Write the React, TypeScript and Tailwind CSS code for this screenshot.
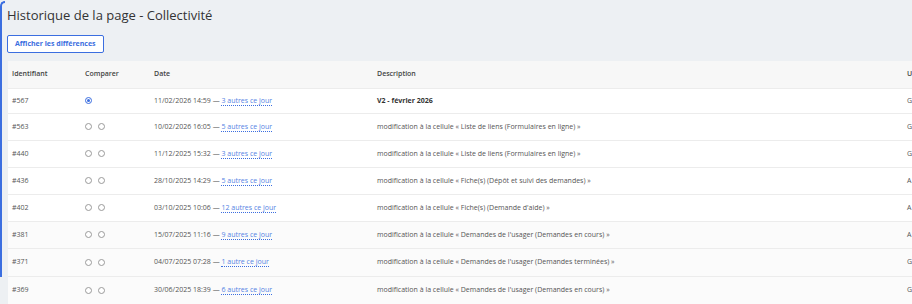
import React from 'react'

type Row = {
  id: string
  selected?: boolean
  date: string
  others: string
  desc: string
  bold?: boolean
  user: string
  shaded?: boolean
}

const rows: Row[] = [
  { id: '#567', selected: true, date: '11/02/2026 14:59', others: '3 autres ce jour', desc: 'V2 - février 2026', bold: true, user: 'G' },
  { id: '#563', date: '10/02/2026 16:05', others: '5 autres ce jour', desc: 'modification à la cellule « Liste de liens (Formulaires en ligne) »', user: 'G' },
  { id: '#440', date: '11/12/2025 15:32', others: '3 autres ce jour', desc: 'modification à la cellule « Liste de liens (Formulaires en ligne) »', user: 'G' },
  { id: '#436', date: '28/10/2025 14:29', others: '5 autres ce jour', desc: 'modification à la cellule « Fiche(s) (Dépôt et suivi des demandes) »', user: 'A' },
  { id: '#402', date: '03/10/2025 10:06', others: '12 autres ce jour', desc: "modification à la cellule « Fiche(s) (Demande d'aide) »", user: 'A' },
  { id: '#381', date: '15/07/2025 11:16', others: '9 autres ce jour', desc: "modification à la cellule « Demandes de l'usager (Demandes en cours) »", user: 'A', shaded: true },
  { id: '#371', date: '04/07/2025 07:28', others: '1 autre ce jour', desc: "modification à la cellule « Demandes de l'usager (Demandes terminées) »", user: 'G', shaded: true },
  { id: '#369', date: '30/06/2025 18:39', others: '6 autres ce jour', desc: "modification à la cellule « Demandes de l'usager (Demandes en cours) »", user: 'G', shaded: true },
]

function Radio({ checked }: { checked?: boolean }) {
  if (checked) {
    return (
      <span className="inline-flex h-[7px] w-[7px] items-center justify-center rounded-full border border-[#3b6ee0] bg-white">
        <span className="h-[3px] w-[3px] rounded-full bg-[#3b6ee0]" />
      </span>
    )
  }
  return <span className="inline-block h-[7px] w-[7px] rounded-full border border-[#9a9a9a] bg-white" />
}

export default function App() {
  return (
    <div className="relative h-[304px] w-[912px] overflow-hidden bg-[#edf0f3] font-['Open_Sans',sans-serif] text-[#555]">
      <div className="absolute left-0 top-[1px] h-[276px] w-[5px] rounded-tl-[5px] border-l-2 border-t-2 border-[#3b6ee0]" />

      <div className="pl-[7px] pt-[2px]">
        <h1 className="text-[13px] leading-[26px] text-[#333]">Historique de la page - Collectivité</h1>
        <button className="mt-[7px] h-[18px] rounded-[2px] border border-[#3b6ee0] bg-white px-[7px] text-[7px] font-bold text-[#3b6ee0]">
          Afficher les différences
        </button>
      </div>

      <div className="ml-[8px] mt-[8px] bg-white">
        <table className="w-[1000px] table-fixed border-collapse text-left text-[7px]">
          <colgroup>
            <col className="w-[73px]" />
            <col className="w-[69px]" />
            <col className="w-[223px]" />
            <col className="w-[530px]" />
            <col />
          </colgroup>
          <thead>
            <tr className="h-[27px] bg-[#f7f7f7] text-[#444]">
              <th className="pl-[4px] font-semibold">Identifiant</th>
              <th className="pl-[4px] font-semibold">Comparer</th>
              <th className="pl-[4px] font-semibold">Date</th>
              <th className="pl-[4px] font-semibold">Description</th>
              <th className="pl-[4px] font-semibold">Utilisateur</th>
            </tr>
          </thead>
          <tbody>
            {rows.map((r, i) => (
              <tr
                key={r.id}
                className={`${i === 0 ? 'h-[25px]' : i >= 6 ? 'h-[28px]' : 'h-[27px]'} border-t border-[#ececec] ${r.shaded ? 'bg-[#fbfbfb]' : 'bg-white'}`}
              >
                <td className="pl-[4px]">{r.id}</td>
                <td className="pl-[4px]">
                  {r.selected ? (
                    <span className="flex"><Radio checked /></span>
                  ) : (
                    <span className="flex gap-[6px]"><Radio /><Radio /></span>
                  )}
                </td>
                <td className="pl-[4px] whitespace-nowrap">
                  {r.date} — <a className="border-b border-dotted border-[#3b6ee0] text-[#5583e4]">{r.others}</a>
                </td>
                <td className={`pl-[4px] whitespace-nowrap ${r.bold ? 'font-bold text-[#333]' : ''}`}>{r.desc}</td>
                <td className="pl-[4px]">{r.user}</td>
              </tr>
            ))}
          </tbody>
        </table>
      </div>
    </div>
  )
}
